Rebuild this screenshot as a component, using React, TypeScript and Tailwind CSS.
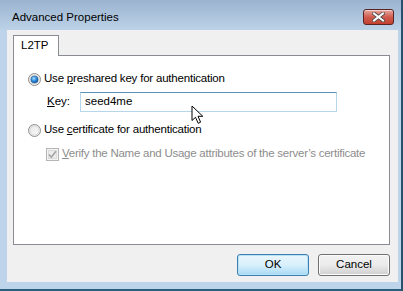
import React from 'react'

const FONT = { fontFamily: '"Liberation Sans", Arial, sans-serif' }

function Radio({ checked }: { checked: boolean }) {
  return (
    <svg width="13" height="13" viewBox="0 0 13 13" className="shrink-0">
      <defs>
        <linearGradient id={checked ? 'rb1' : 'rb0'} x1="0" y1="0" x2="1" y2="1">
          <stop offset="0" stopColor="#e8e8e8" />
          <stop offset="1" stopColor="#f8f8f8" />
        </linearGradient>
        <radialGradient id="rdot" cx="0.4" cy="0.35" r="0.7">
          <stop offset="0" stopColor="#a9dcff" />
          <stop offset="0.5" stopColor="#2f8fe0" />
          <stop offset="1" stopColor="#0b4f9c" />
        </radialGradient>
      </defs>
      <circle cx="6.5" cy="6.5" r="6" fill={`url(#${checked ? 'rb1' : 'rb0'})`} stroke="#8f8f8f" />
      <circle cx="6.5" cy="6.5" r="4.6" fill="none" stroke="#d6d6d6" />
      {checked && <circle cx="6.5" cy="6.5" r="3.6" fill="url(#rdot)" stroke="#2c5d8a" strokeWidth="0.6" />}
    </svg>
  )
}

function DisabledCheck() {
  return (
    <svg width="13" height="13" viewBox="0 0 13 13" className="shrink-0">
      <rect x="0.5" y="0.5" width="12" height="12" fill="#f4f4f4" stroke="#b5b5b5" />
      <rect x="2.5" y="2.5" width="8" height="8" fill="#ececec" stroke="#dcdcdc" />
      <path d="M3 6.5 L5.3 9.2 L10 3.3" fill="none" stroke="#a6a6a6" strokeWidth="1.7" />
    </svg>
  )
}

function Cursor() {
  return (
    <svg width="14" height="20" viewBox="0 0 14 20" className="absolute left-[191px] top-[105px]">
      <path d="M1 1 L1 15.5 L4.5 12.3 L7.2 18.3 L9.6 17.2 L7 11.3 L11.8 11.3 Z" fill="#fff" stroke="#000" strokeWidth="1" strokeLinejoin="miter" />
    </svg>
  )
}

export default function App() {
  return (
    <div className="relative flex h-[291px] w-[403px] flex-col overflow-hidden bg-[#bdd4ea] text-[11px] text-black" style={FONT}>
      <div className="flex h-[30px] shrink-0 items-center justify-between bg-gradient-to-b from-[#9bb3cf] to-[#bcd2e8] pl-[12px] pr-[9px]">
        <span className="pt-[5px] text-[11.5px]">Advanced Properties</span>
        <div className="mt-[3px] flex h-[16px] w-[31px] items-center justify-center rounded-[3px] border border-[#5b2424] bg-gradient-to-b from-[#e6a89f] via-[#cf5c4f] to-[#c4402e] shadow-[inset_0_1px_0_rgba(255,255,255,0.5)]">
          <svg width="13" height="10" viewBox="0 0 13 10">
            <path d="M2 1.5 L11 8.5 M11 1.5 L2 8.5" stroke="#4a4a4a" strokeWidth="3.6" strokeLinecap="square" />
            <path d="M2 1.5 L11 8.5 M11 1.5 L2 8.5" stroke="#ffffff" strokeWidth="2" strokeLinecap="square" />
          </svg>
        </div>
      </div>
      <div className="flex flex-1 pl-[7px] pr-[5px]">
        <div className="flex flex-1 flex-col bg-[#f0f0f0] pl-[6px] pr-[8px] pt-[5px]">
          <div className="relative z-10 -mb-px flex h-[21px] w-[46px] items-center border border-b-0 border-[#898c95] bg-white pl-[7px] text-[11.5px]">
            L2TP
          </div>
          <div className="flex h-[190px] flex-col border border-[#898c95] bg-white pl-[14px] pt-[15px] text-[11.5px]">
            <div className="flex h-[16px] items-center gap-[3px]">
              <Radio checked />
              <span className="tracking-[-0.2px]">Use <u>p</u>reshared key for authentication</span>
            </div>
            <div className="mt-[5px] flex h-[20px] items-center pl-[19px]">
              <span className="w-[33px]"><u>K</u>ey:</span>
              <div className="flex h-[20px] w-[257px] items-center border border-[#b6d6ec] border-t-[#5c93bc] pl-[4px]">seed4me</div>
            </div>
            <div className="mt-[10px] flex h-[16px] items-center gap-[3px]">
              <Radio checked={false} />
              <span className="tracking-[-0.2px]">Use <u>c</u>ertificate for authentication</span>
            </div>
            <div className="mt-[8px] flex h-[16px] items-center gap-[3px] whitespace-nowrap pl-[18px] text-[#8d8d8d]">
              <DisabledCheck />
              <span className="tracking-[-0.25px]"><u>V</u>erify the Name and Usage attributes of the server’s certificate</span>
            </div>
          </div>
          <div className="mt-[9px] flex justify-end gap-[9px] text-[11.5px]">
            <button className="h-[22px] w-[72px] rounded-[3px] border border-[#3c7fb1] bg-gradient-to-b from-[#eaf6fd] via-[#d9f0fc] to-[#a7d9f5] shadow-[inset_0_0_0_1px_#b8e2f7]">OK</button>
            <button className="h-[22px] w-[72px] rounded-[3px] border border-[#707070] bg-gradient-to-b from-[#f2f2f2] via-[#ebebeb] to-[#cfcfcf] shadow-[inset_0_0_0_1px_#fcfcfc]">Cancel</button>
          </div>
        </div>
      </div>
      <div className="h-[7px] shrink-0" />
      <div className="h-[2px] shrink-0 bg-[#2a5f7d]" />
      <div className="absolute right-0 top-0 h-full w-[2px] bg-[#2a5070]" />
      <Cursor />
    </div>
  )
}
